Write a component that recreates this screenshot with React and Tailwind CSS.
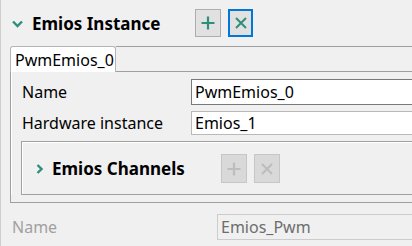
import React from 'react';

const teal = '#2f8f7b';

function PlusIcon({ color, size = 14 }) {
  return (
    <svg width={size} height={size} viewBox="0 0 14 14">
      <path d="M7 0.5V13.5M0.5 7H13.5" stroke={color} strokeWidth="2.2" fill="none" />
    </svg>
  );
}

function CrossIcon({ color, size = 12 }) {
  return (
    <svg width={size} height={size} viewBox="0 0 12 12">
      <path d="M1 1L11 11M11 1L1 11" stroke={color} strokeWidth="2" fill="none" />
    </svg>
  );
}

function ChevronDown() {
  return (
    <svg width="11" height="8" viewBox="0 0 11 8">
      <path d="M1 1.5L5.5 6L10 1.5" stroke={teal} strokeWidth="2.4" fill="none" />
    </svg>
  );
}

function ChevronRight() {
  return (
    <svg width="7" height="10" viewBox="0 0 7 10">
      <path d="M1.5 1L5.5 5L1.5 9" stroke={teal} strokeWidth="2.4" fill="none" />
    </svg>
  );
}

export default function App() {
  return (
    <div
      className="w-[412px] h-[246px] overflow-hidden bg-[#f0f0f0] border-l border-[#cdcdcd] text-black"
      style={{ fontFamily: '"Noto Sans", "Open Sans", sans-serif' }}
    >
      {/* Section header */}
      <div className="flex items-center h-[46px]">
        <div className="w-[31px] flex justify-end pr-[9px] pt-[1px]">
          <ChevronDown />
        </div>
        <div className="w-[163px] text-[17px] font-bold leading-none">Emios Instance</div>
        <button className="w-[26px] h-[28px] flex items-center justify-center bg-[#e1e1e1] border border-[#adadad]">
          <PlusIcon color={teal} />
        </button>
        <button className="ml-[7px] w-[25px] h-[28px] flex items-center justify-center bg-[#e1e1e1] border-2 border-[#0078d7]">
          <CrossIcon color={teal} />
        </button>
      </div>

      {/* Tab strip */}
      <div className="flex h-[26px] pl-[9px]">
        <div className="w-[106px] bg-white border border-b-0 border-[#b4b4b4] rounded-t-[3px] flex items-center pl-[4px] text-[16px] leading-none">
          PwmEmios_0
        </div>
        <div className="flex-1 border-t border-b border-[#a0a0a0]"></div>
      </div>

      {/* Tab panel */}
      <div className="ml-[9px] border-l border-b border-[#a0a0a0] pb-[7px]">
        <div className="border-l border-white pt-[7px]">
          <div className="flex items-center h-[26px] pl-[10px]">
            <div className="w-[169px] shrink-0 text-[16px] leading-none">Name</div>
            <div className="flex-1 -mr-[4px] h-full bg-white border border-[#7a7a7a] flex items-center pl-[3px] text-[16px] leading-none">
              PwmEmios_0
            </div>
          </div>
          <div className="flex items-center h-[24px] mt-[6px] pl-[10px]">
            <div className="w-[169px] shrink-0 text-[16px] leading-none">Hardware instance</div>
            <div className="flex-1 -mr-[4px] h-full bg-white border border-[#b9b9b9] flex items-center pl-[3px] text-[16px] leading-none">
              Emios_1
            </div>
          </div>

          {/* Emios Channels group */}
          <div className="ml-[9px] mt-[6px] border-l border-t border-b border-[#a0a0a0]">
            <div className="flex items-center h-[52px] border-l border-t border-white">
              <div className="w-[29px] flex justify-end pr-[9px]">
                <ChevronRight />
              </div>
              <div className="w-[169px] text-[17px] font-bold leading-none">Emios Channels</div>
              <button className="w-[26px] h-[29px] flex items-center justify-center bg-[#d9d9d9] border border-[#c6c6c6]">
                <PlusIcon color="#bdbdbd" />
              </button>
              <button className="ml-[7px] w-[26px] h-[29px] flex items-center justify-center bg-[#d9d9d9] border border-[#c6c6c6]">
                <CrossIcon color="#bdbdbd" />
              </button>
            </div>
          </div>
        </div>
      </div>

      {/* Disabled field */}
      <div className="flex items-center h-[26px] mt-[11px] pl-[11px]">
        <div className="w-[205px] shrink-0 text-[16px] leading-none text-[#a0a0a0]">Name</div>
        <div className="flex-1 -mr-[4px] h-full bg-[#f0f0f0] border border-[#cccccc] flex items-center pl-[3px] text-[16px] leading-none text-[#6d6d6d]">
          Emios_Pwm
        </div>
      </div>
    </div>
  );
}
